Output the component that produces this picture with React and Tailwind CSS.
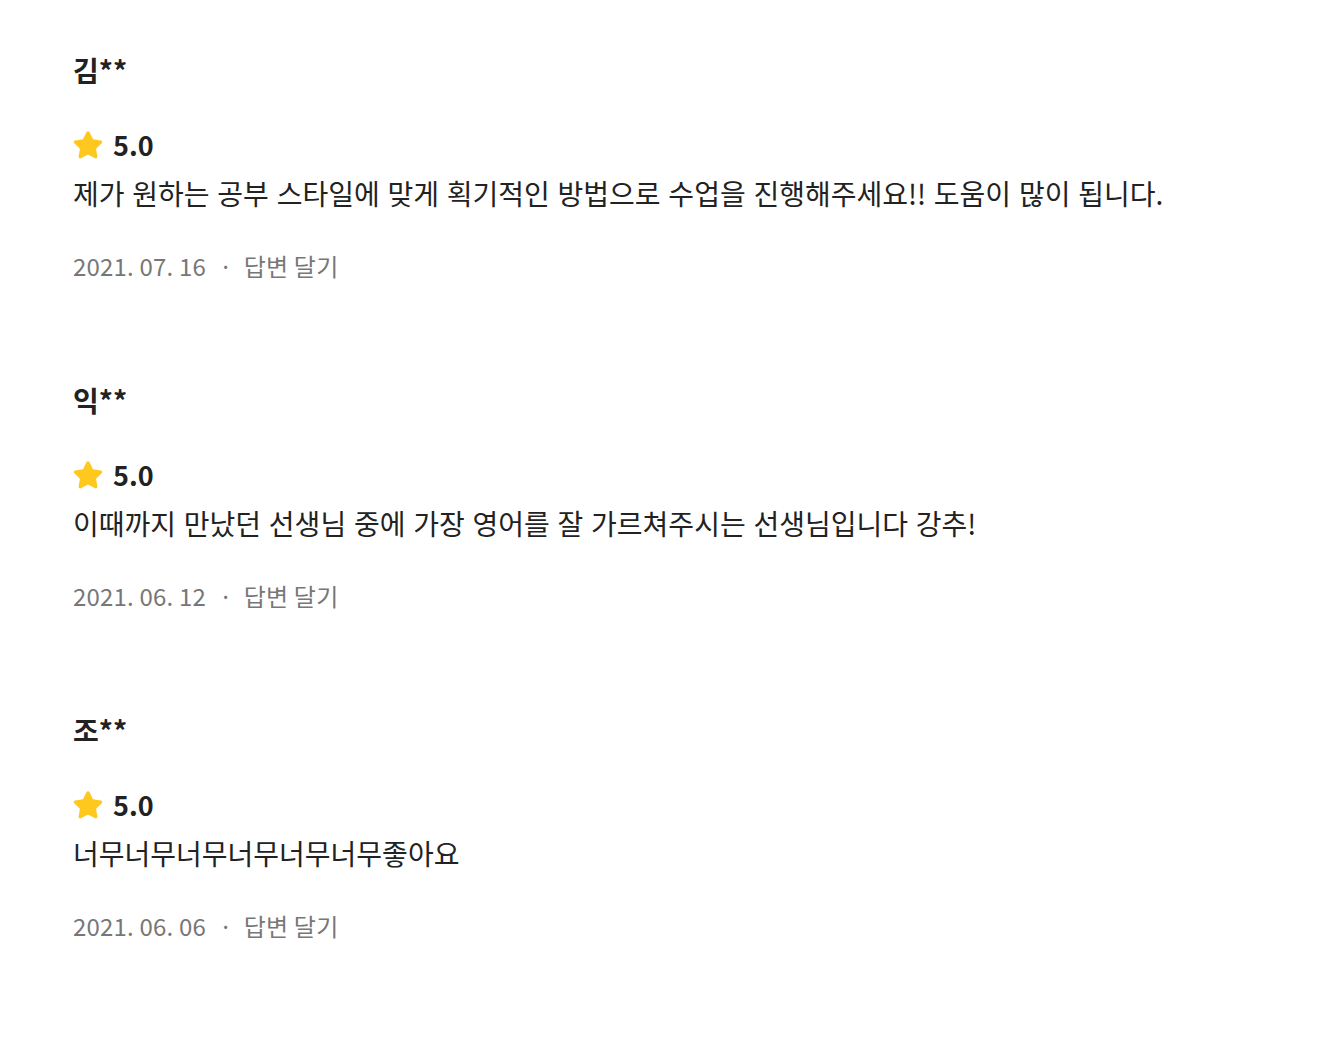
import React from "react";

const reviews = [
  {
    name: "김**",
    rating: "5.0",
    text: "제가 원하는 공부 스타일에 맞게 획기적인 방법으로 수업을 진행해주세요!! 도움이 많이 됩니다.",
    date: "2021. 07. 16",
  },
  {
    name: "익**",
    rating: "5.0",
    text: "이때까지 만났던 선생님 중에 가장 영어를 잘 가르쳐주시는 선생님입니다 강추!",
    date: "2021. 06. 12",
  },
  {
    name: "조**",
    rating: "5.0",
    text: "너무너무너무너무너무너무좋아요",
    date: "2021. 06. 06",
  },
];

const Star = () => (
  <svg width="30" height="28" viewBox="2 1 20 19.4" className="shrink-0">
    <path
      d="M12 1.2c.5 0 .9.3 1.1.7l2.4 4.9 5.4.8c.9.1 1.3 1.3.6 1.9l-3.9 3.8.9 5.4c.2.9-.8 1.6-1.6 1.2L12 17.3l-4.9 2.6c-.8.4-1.8-.3-1.6-1.2l.9-5.4-3.9-3.8c-.7-.6-.3-1.8.6-1.9l5.4-.8 2.4-4.9c.2-.4.6-.7 1.1-.7z"
      fill="#FFC81E"
    />
  </svg>
);

const ReviewItem = ({ review }) => (
  <div className="pb-[96px]">
    <div className="text-[28px] font-bold text-[#222] leading-[40px]">
      {review.name}
    </div>
    <div className="flex items-center gap-[10px] mt-[35px] h-[40px]">
      <Star />
      <span className="text-[27px] font-bold text-[#222] leading-[40px]">
        {review.rating}
      </span>
    </div>
    <div className="text-[28px] text-[#222] leading-[40px] mt-[8px] [word-spacing:1.5px]">
      {review.text}
    </div>
    <div className="flex items-center text-[24px] text-[#777] mt-[35px] leading-[36px] tracking-[0.2px]">
      <span>{review.date}</span>
      <span className="ml-[13px] mr-[11px]">·</span>
      <span>답변 달기</span>
    </div>
  </div>
);

export default function App() {
  return (
    <div
      className="min-h-screen bg-white pl-[73px] pt-[50px]"
      style={{ fontFamily: '"Noto Sans CJK KR", "Noto Sans", sans-serif' }}
    >
      {reviews.map((r, i) => (
        <ReviewItem key={i} review={r} />
      ))}
    </div>
  );
}
